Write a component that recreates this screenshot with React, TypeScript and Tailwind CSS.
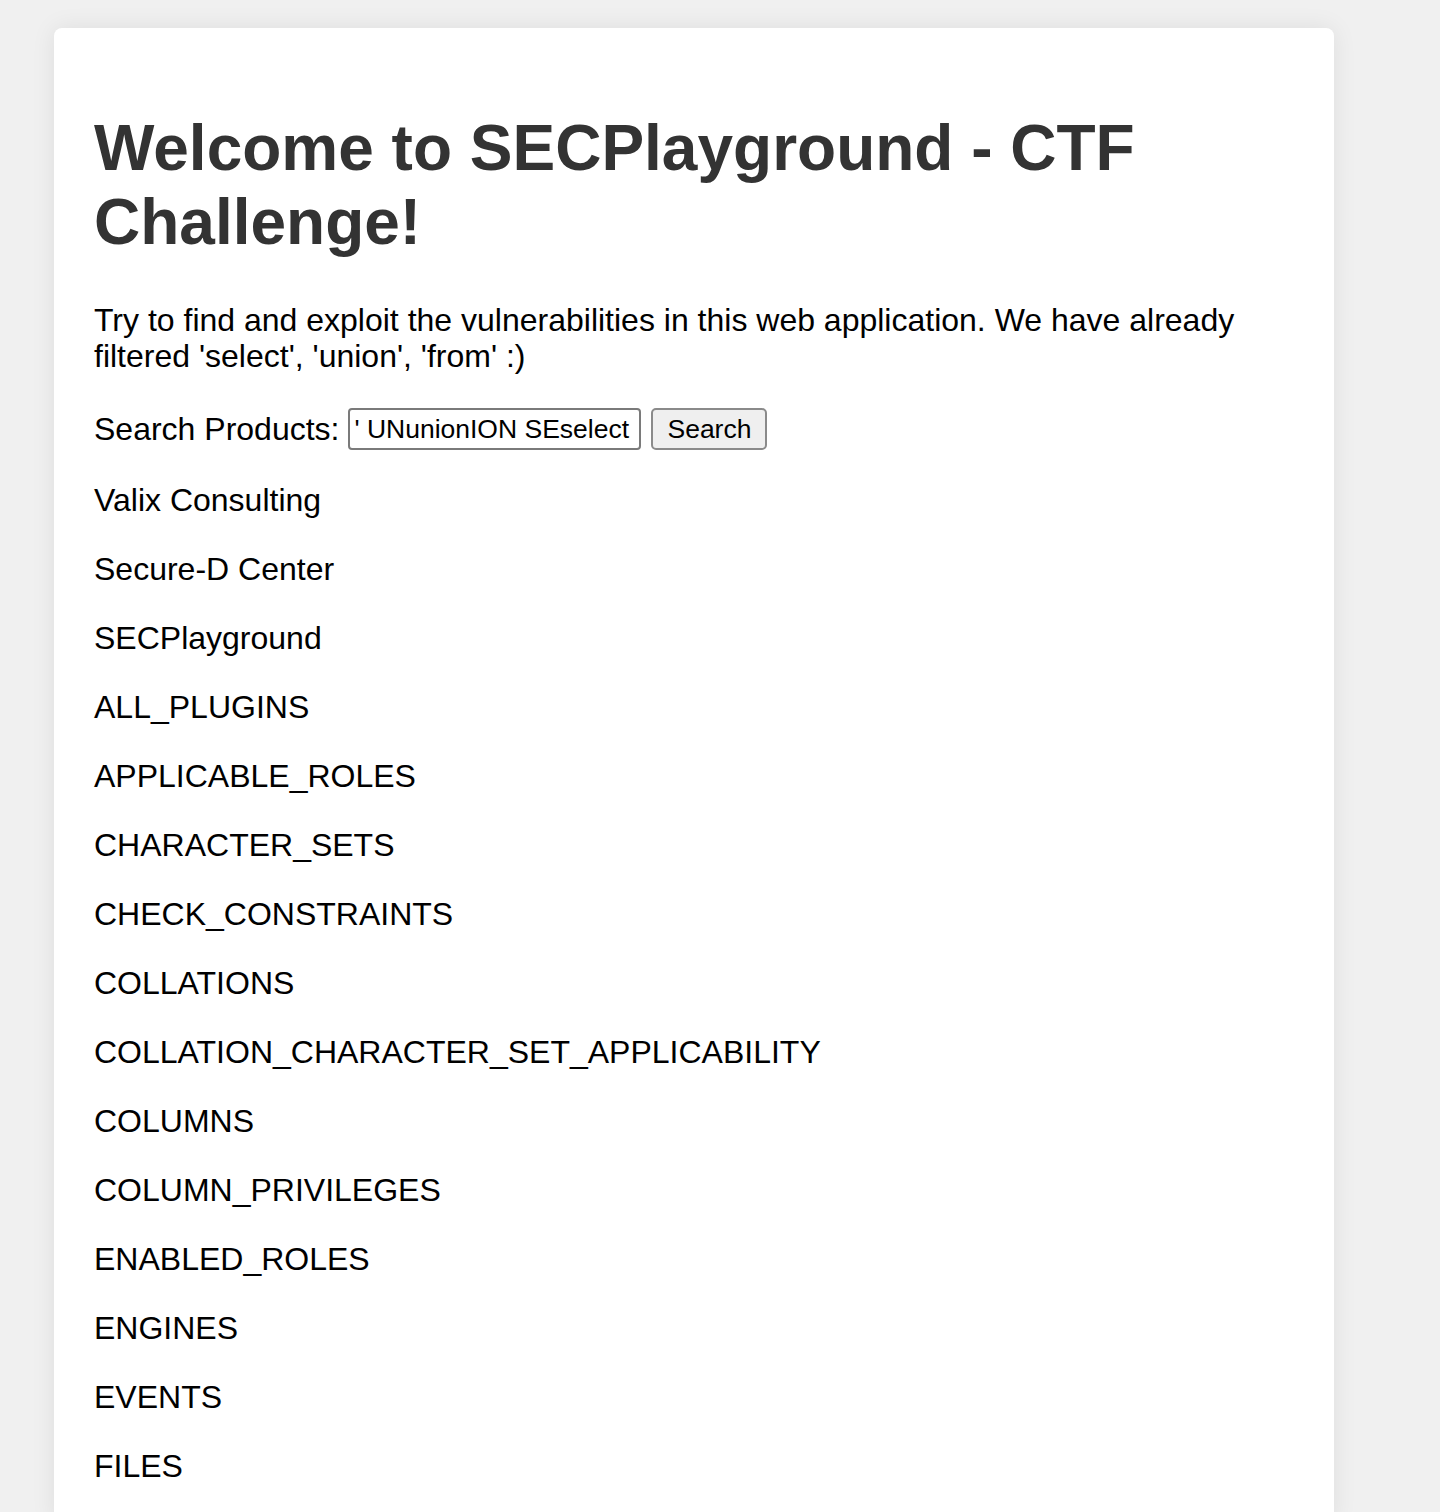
import React from "react";

const results = [
  "Valix Consulting",
  "Secure-D Center",
  "SECPlayground",
  "ALL_PLUGINS",
  "APPLICABLE_ROLES",
  "CHARACTER_SETS",
  "CHECK_CONSTRAINTS",
  "COLLATIONS",
  "COLLATION_CHARACTER_SET_APPLICABILITY",
  "COLUMNS",
  "COLUMN_PRIVILEGES",
  "ENABLED_ROLES",
  "ENGINES",
  "EVENTS",
  "FILES",
];

const App = () => {
  return (
    <div className="min-h-screen bg-[#f0f0f0] pt-[28px] font-['Liberation_Sans',Arial,sans-serif] text-black">
      <div className="ml-[54px] w-[1280px] rounded-lg bg-white px-[40px] pt-[83px] pb-10 shadow-[0_0_24px_rgba(0,0,0,0.08)]">
        <h1 className="text-[64px] font-bold leading-[74px] text-[#333]">
          Welcome to SECPlayground - CTF Challenge!
        </h1>
        <p className="mt-[43px] text-[32px] leading-[36px]">
          Try to find and exploit the vulnerabilities in this web application. We have already filtered 'select', 'union', 'from' :)
        </p>
        <form className="mt-[34px] flex items-center" onSubmit={(e) => e.preventDefault()}>
          <label className="mr-[9px] text-[32px] leading-[36px]">Search Products:</label>
          <input
            type="text"
            defaultValue="' UNunionION SEselect"
            className="h-[42px] w-[293px] rounded-[4px] border-2 border-[#7a7a7a] px-[4px] text-[26.5px] text-black outline-none"
          />
          <button
            type="submit"
            className="ml-[10px] h-[42px] w-[116px] rounded-[5px] border-2 border-[#8a8a8a] bg-[#efefef] text-[26.5px] text-black"
          >
            Search
          </button>
        </form>
        <div className="mt-[32px] flex flex-col gap-[33px]">
          {results.map((r) => (
            <p key={r} className="text-[32px] leading-[36px]">
              {r}
            </p>
          ))}
        </div>
      </div>
    </div>
  );
};

export default App;
